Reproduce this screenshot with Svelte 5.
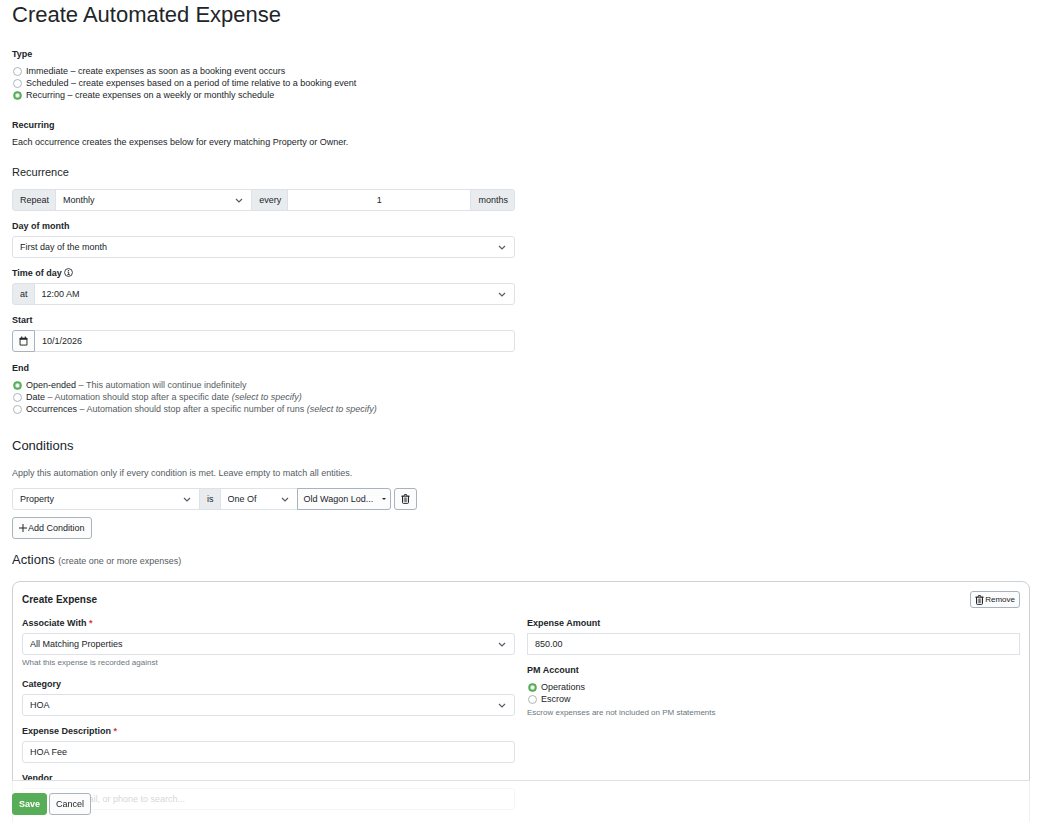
<script>
  let type = $state('recurring');
  let end = $state('open');
  let account = $state('operations');
  let every = $state('1');
  let start = $state('10/1/2026');
  let amount = $state('850.00');
  let description = $state('HOA Fee');

  const types = [
    { id: 'immediate', text: 'Immediate – create expenses as soon as a booking event occurs' },
    { id: 'scheduled', text: 'Scheduled – create expenses based on a period of time relative to a booking event' },
    { id: 'recurring', text: 'Recurring – create expenses on a weekly or monthly schedule' }
  ];
  const ends = [
    { id: 'open', name: 'Open-ended', text: 'This automation will continue indefinitely', hint: '' },
    { id: 'date', name: 'Date', text: 'Automation should stop after a specific date', hint: '(select to specify)' },
    { id: 'count', name: 'Occurrences', text: 'Automation should stop after a specific number of runs', hint: '(select to specify)' }
  ];
  const accounts = [
    { id: 'operations', text: 'Operations' },
    { id: 'escrow', text: 'Escrow' }
  ];
</script>

{#snippet trash()}
  <svg class="icon" viewBox="0 0 14 16" aria-hidden="true">
    <path d="M1 3.5h12M4.5 3.2l.8-2.2h3.4l.8 2.2M2.2 3.5v10q0 1.5 1.5 1.5h6.6q1.5 0 1.5-1.5v-10" fill="none" stroke="currentColor" stroke-width="1.6" stroke-linecap="round" />
    <path d="M5 6.200v6M7 6.200v6M9 6.200v6" stroke="currentColor" stroke-width="1" stroke-linecap="round" />
  </svg>
{/snippet}

<form class="page">
  <h1>Create Automated Expense</h1>

  <fieldset class="type">
    <legend class="label">Type</legend>
    {#each types as t}
      <label class="radio"><input type="radio" name="type" value={t.id} bind:group={type} /><span>{t.text}</span></label>
    {/each}
  </fieldset>

  <section class="about">
    <h4 class="label">Recurring</h4>
    <p>Each occurrence creates the expenses below for every matching Property or Owner.</p>
  </section>

  <h3>Recurrence</h3>
  <div class="columns">
    <div class="stack">
      <div class="group">
        <label class="addon" for="repeat">Repeat</label>
        <select id="repeat" class="control share"><option>Monthly</option><option>Weekly</option></select>
        <label class="addon" for="every">every</label>
        <input id="every" class="control share count" bind:value={every} />
        <span class="addon">months</span>
      </div>
      <div class="field">
        <label class="label" for="day">Day of month</label>
        <select id="day" class="control"><option>First day of the month</option></select>
      </div>
      <div class="field">
        <label class="label" for="time">Time of day
          <svg class="info" viewBox="0 0 16 16" aria-hidden="true">
            <circle cx="8" cy="8" r="7" fill="none" stroke="currentColor" stroke-width="1.5" />
            <circle cx="8" cy="4.6" r="1.2" fill="currentColor" />
            <path d="M6.300 7.300h2v4.200M6 11.700h4.300" fill="none" stroke="currentColor" stroke-width="1.5" />
          </svg>
        </label>
        <div class="group">
          <span class="addon">at</span>
          <select id="time" class="control"><option>12:00 AM</option></select>
        </div>
      </div>
      <div class="field">
        <label class="label" for="start">Start</label>
        <div class="group">
          <button type="button" class="btn square" aria-label="Open calendar">
            <svg class="icon" viewBox="0 0 14 16" aria-hidden="true">
              <path d="M1.500 3.500h11v11h-11z" fill="none" stroke="currentColor" stroke-width="1.5" stroke-linejoin="round" />
              <path d="M1 3h12v3H1zM3.200.800h1.800v3H3.200zM9 .800h1.800v3H9z" fill="currentColor" />
            </svg>
          </button>
          <input id="start" class="control" bind:value={start} />
        </div>
      </div>
      <fieldset class="end">
        <legend class="label">End</legend>
        {#each ends as e}
          <label class="radio"><input type="radio" name="end" value={e.id} bind:group={end} /><span>{e.name} <span class="muted">– {e.text} <em>{e.hint}</em></span></span></label>
        {/each}
      </fieldset>
    </div>
  </div>

  <h2 class="conditions">Conditions</h2>
  <p class="muted">Apply this automation only if every condition is met. Leave empty to match all entities.</p>
  <div class="condition">
    <div class="group">
      <select class="control subject" aria-label="Condition subject"><option>Property</option></select>
      <span class="addon">is</span>
      <select class="control operator" aria-label="Condition operator"><option>One Of</option></select>
      <button type="button" class="btn picker">Old Wagon Lod...<span class="caret"></span></button>
    </div>
    <button type="button" class="btn square" aria-label="Delete condition">{@render trash()}</button>
  </div>
  <button type="button" class="btn add">
    <svg class="plus" viewBox="0 0 8 8" aria-hidden="true"><path d="M4 0v8M0 4h8" stroke="currentColor" fill="none" /></svg>Add Condition
  </button>

  <h2 class="actions">Actions <small>(create one or more expenses)</small></h2>

  <section class="card">
    <header>
      <h3>Create Expense</h3>
      <button type="button" class="btn small">{@render trash()}Remove</button>
    </header>
    <div class="columns">
      <div class="stack">
        <div class="field">
          <label class="label" for="assoc">Associate With <b>*</b></label>
          <select id="assoc" class="control"><option>All Matching Properties</option></select>
          <small class="help">What this expense is recorded against</small>
        </div>
        <div class="field">
          <label class="label" for="category">Category</label>
          <select id="category" class="control"><option>HOA</option></select>
        </div>
        <div class="field">
          <label class="label" for="desc">Expense Description <b>*</b></label>
          <input id="desc" class="control" bind:value={description} />
        </div>
        <div class="field">
          <label class="label" for="vendor">Vendor</label>
          <input id="vendor" class="control" placeholder="Use name, email, or phone to search..." />
        </div>
      </div>
      <div class="stack">
        <div class="field">
          <label class="label" for="amount">Expense Amount</label>
          <input id="amount" class="control plain" bind:value={amount} />
        </div>
        <fieldset>
          <legend class="label">PM Account</legend>
          {#each accounts as a}
            <label class="radio"><input type="radio" name="account" value={a.id} bind:group={account} /><span>{a.text}</span></label>
          {/each}
          <small class="help">Escrow expenses are not included on PM statements</small>
        </fieldset>
      </div>
    </div>
  </section>

  <footer>
    <button type="submit" class="btn save">Save</button>
    <button type="button" class="btn">Cancel</button>
  </footer>
</form>

<style>
  :global(body) { background: #fff; }
  .page {
    box-sizing: border-box;
    height: 100vh;
    overflow-y: auto;
    scrollbar-width: none;
    padding: 1px 16px 0 12px;
    font: 9px/12px "Liberation Sans", Arial, sans-serif;
    color: #212529;
  }
  .page :global(*) { box-sizing: border-box; }
  h1, h2, h3, h4, p, fieldset { margin: 0; padding: 0; border: 0; min-width: 0; }
  h1 { font-size: 22px; line-height: 28px; font-weight: 400; }
  h2 { font-size: 13px; line-height: 16px; font-weight: 400; }
  h3 { font-size: 11px; line-height: 16px; font-weight: 400; margin: 16px 0 9px; }
  .label { display: block; padding: 0; font-size: 9px; line-height: 12px; font-weight: 700; }
  .label b { color: #dc3545; }
  legend.label { margin-bottom: 5px; }
  .type { margin-top: 19px; }
  .about { margin-top: 18px; }
  .about p { margin-top: 5px; }
  .muted { color: #565c62; }

  .radio { display: flex; align-items: flex-start; gap: 4px; }
  .radio input {
    appearance: none;
    flex: none;
    width: 9px;
    height: 9px;
    margin: 2px 0 0 1px;
    border: 1px solid #adb5bd;
    border-radius: 50%;
    background: #fff;
  }
  .radio input:checked {
    border-color: #58ad58;
    background: radial-gradient(circle, #fff 1px, #58ad58 3px);
  }

  .columns { display: grid; grid-template-columns: 1fr 1fr; gap: 12px; }
  .stack { display: flex; flex-direction: column; gap: 9px; min-width: 0; }
  .end { margin-top: 1px; }
  .field .label { margin-bottom: 4px; }
  .control {
    display: block;
    width: 100%;
    min-width: 0;
    height: 22px;
    margin: 0;
    padding: 0 7px 1px;
    border: 1px solid #dee2e6;
    border-radius: 3px;
    background-color: #fff;
    font: inherit;
    color: inherit;
  }
  .control::placeholder { color: #6c757d; }
  select.control {
    appearance: none;
    padding-right: 20px;
    background-image: url("data:image/svg+xml,%3Csvg xmlns='http://www.w3.org/2000/svg' viewBox='0 0 8 8'%3E%3Cpath d='M1 3l3 3 3-3' fill='none' stroke='%23565c62' stroke-width='1.2'/%3E%3C/svg%3E");
    background-repeat: no-repeat;
    background-position: right 8px center;
    background-size: 8px 8px;
  }
  .plain { border-radius: 0; }
  .group { display: flex; }
  .group > * { border-radius: 0; }
  .group > * + * { margin-left: -1px; }
  .group > :first-child { border-radius: 3px 0 0 3px; }
  .group > :last-child { border-radius: 0 3px 3px 0; }
  .addon {
    flex: none;
    height: 22px;
    padding: 4px 6px 4px 7px;
    border: 1px solid #dee2e6;
    background: #e9ecef;
  }
  .share { flex: 1 1 0; }
  .count { text-align: center; }

  .btn {
    flex: none;
    display: inline-flex;
    align-items: center;
    justify-content: center;
    height: 22px;
    padding: 0 6px 1px;
    border: 1px solid #a9b3bd;
    border-radius: 3px;
    background: #fcfcfd;
    font: inherit;
    color: inherit;
  }
  .square { width: 23px; padding: 0; }
  .group > .btn { position: relative; z-index: 1; }
  .icon { width: 9px; height: 10px; }
  .info { width: 9px; height: 9px; vertical-align: -1px; }

  .conditions { margin: 23px 0 13px; }
  .condition { display: flex; gap: 3px; margin-top: 9px; }
  .subject { width: 188px; }
  .operator { width: 78px; }
  .picker { width: 94px; justify-content: space-between; padding-right: 4px; }
  .caret { border: 2px solid transparent; border-top-color: currentColor; border-bottom: 0; }
  .add { margin-top: 7px; }
  .plus { width: 8px; height: 8px; margin-right: 1px; }
  .actions { margin: 13px 0 12px; }
  .actions small { font-size: 9px; color: #565c62; }

  .card { padding: 9px 9px 60px; border: 1px solid #ced0d2; border-radius: 8px; }
  .card header { display: flex; justify-content: space-between; align-items: center; margin-bottom: 9px; }
  .card h3 { margin: 0; font-size: 10px; font-weight: 700; }
  .small { height: 17px; padding: 0 4px; gap: 1px; font-size: 8px; }
  .help { display: block; margin-top: 2px; font-size: 8px; line-height: 12px; color: #6c757d; }

  footer {
    position: sticky;
    z-index: 2;
    bottom: 0;
    display: flex;
    gap: 2px;
    height: 42px;
    padding-top: 12px;
    border-top: 1px solid #dee2e6;
    background: rgba(255, 255, 255, 0.7);
  }
  .save { border-color: #58ad58; background: #58ad58; color: #fff; font-weight: 700; }
</style>
